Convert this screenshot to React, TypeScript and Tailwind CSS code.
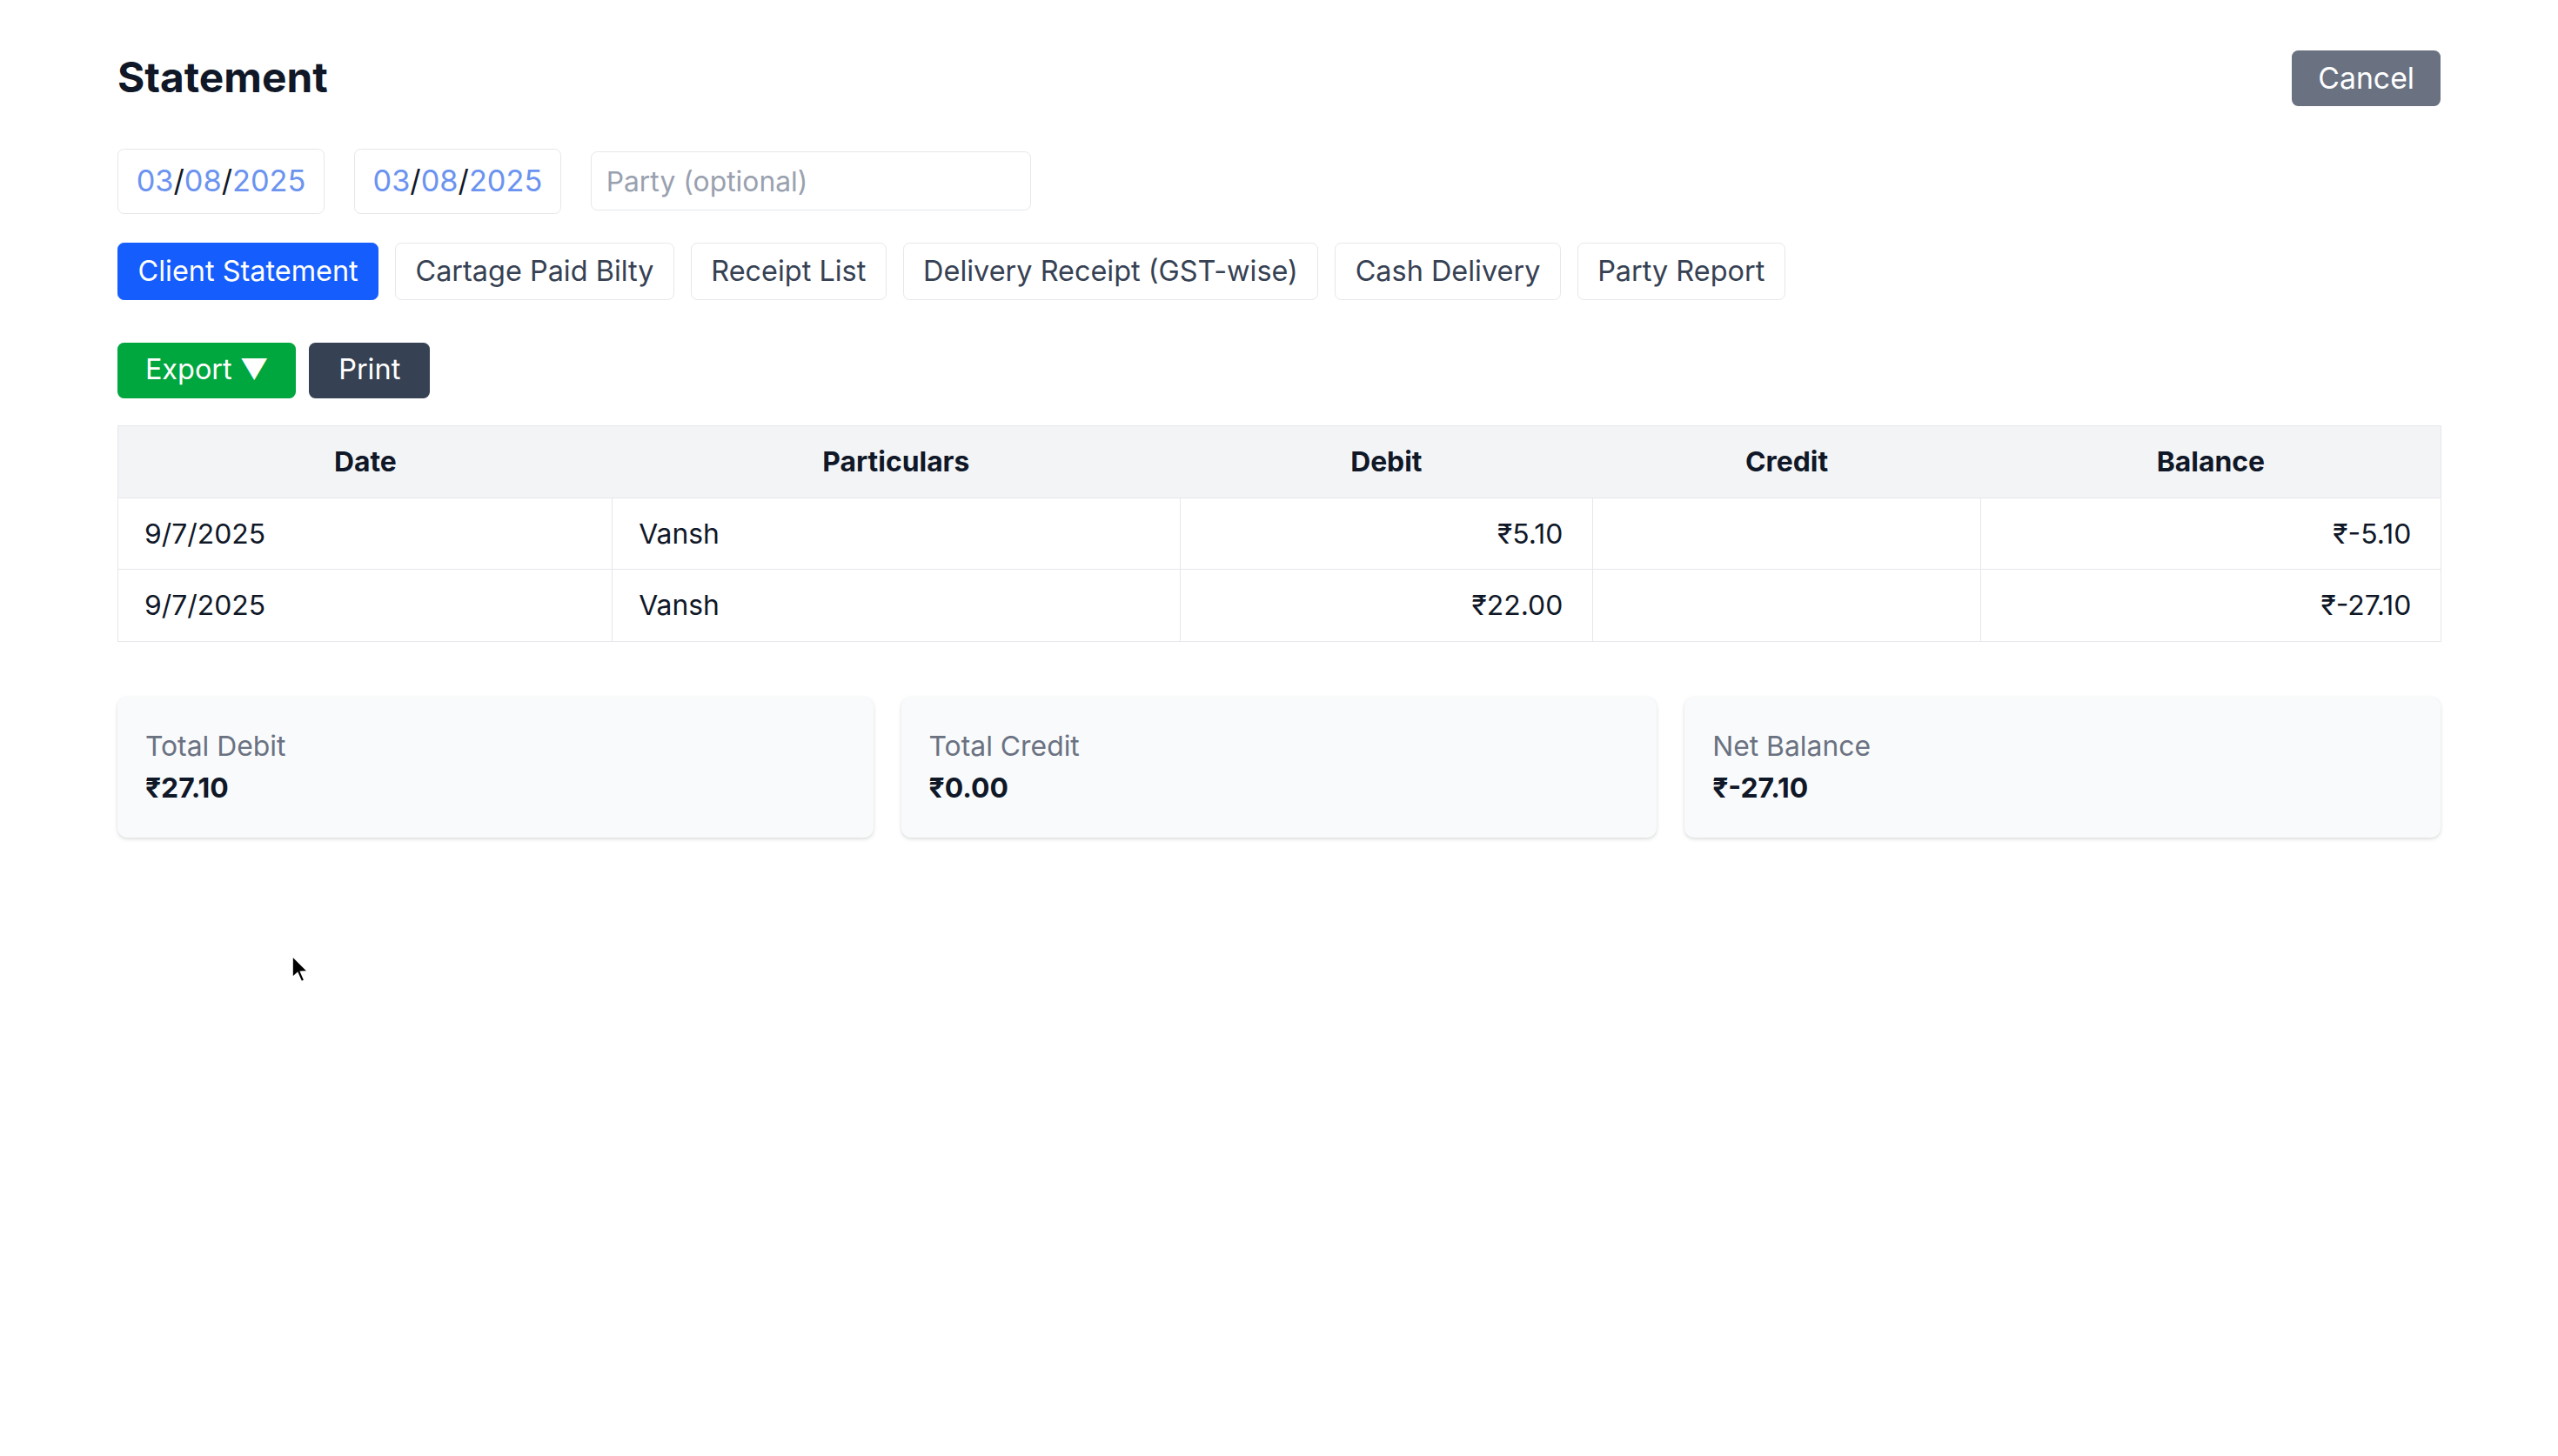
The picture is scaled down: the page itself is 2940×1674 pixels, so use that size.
import React from 'react';

const tabs = [
  'Client Statement',
  'Cartage Paid Bilty',
  'Receipt List',
  'Delivery Receipt (GST-wise)',
  'Cash Delivery',
  'Party Report',
];

const rows = [
  { date: '9/7/2025', particulars: 'Vansh', debit: '₹5.10', credit: '', balance: '₹-5.10' },
  { date: '9/7/2025', particulars: 'Vansh', debit: '₹22.00', credit: '', balance: '₹-27.10' },
];

const totals = [
  { label: 'Total Debit', value: '₹27.10' },
  { label: 'Total Credit', value: '₹0.00' },
  { label: 'Net Balance', value: '₹-27.10' },
];

function DateField() {
  return (
    <div className="flex h-10 w-[127px] items-center rounded border border-gray-200 bg-white px-[11px] text-[18.3px] text-gray-900">
      <span className="text-[#6b93f0]">03</span>
      <span>/</span>
      <span className="text-[#6b93f0]">08</span>
      <span>/</span>
      <span className="text-[#6b93f0]">2025</span>
    </div>
  );
}

export default function App() {
  const [active, setActive] = React.useState(0);

  return (
    <div className="bg-white font-['Inter','Noto_Sans',sans-serif] [zoom:1.875]">
      <div className="relative min-h-[893px] px-[72px] pt-[31px] text-gray-900">
        {/* header */}
        <div className="flex h-[34px] items-center justify-between">
          <h1 className="text-[25.5px] font-bold">Statement</h1>
          <button className="h-[34px] rounded bg-gray-500 px-4 text-lg text-white">Cancel</button>
        </div>

        {/* filters */}
        <div className="mt-[26px] flex items-center gap-[18px]">
          <DateField />
          <DateField />
          <input
            placeholder="Party (optional)"
            className="h-9 w-[270px] rounded border border-gray-200 px-[9px] text-[17px] outline-none placeholder:text-gray-400"
          />
        </div>

        {/* report tabs */}
        <div className="mt-[18px] flex gap-2.5">
          {tabs.map((t, i) => (
            <button
              key={t}
              onClick={() => setActive(i)}
              className={
                i === active
                  ? 'h-[35px] rounded border border-blue-600 bg-blue-600 px-3 text-[17.3px] text-white'
                  : 'h-[35px] rounded border border-gray-200 bg-white px-3 text-[17.3px] text-gray-700'
              }
            >
              {t}
            </button>
          ))}
        </div>

        {/* actions */}
        <div className="mt-[26px] flex gap-2">
          <button className="h-[34px] rounded bg-green-600 px-[17px] text-[17.3px] text-white">Export ▼</button>
          <button className="h-[34px] rounded bg-gray-700 px-[18px] text-[17.3px] text-white">Print</button>
        </div>

        {/* statement table */}
        <table className="mt-[17px] w-full table-fixed border-collapse border border-gray-200 text-[17px]">
          <colgroup>
            <col className="w-[303px]" />
            <col className="w-[348px]" />
            <col className="w-[253px]" />
            <col className="w-[238px]" />
            <col className="w-[282px]" />
          </colgroup>
          <thead>
            <tr className="bg-gray-100">
              {['Date', 'Particulars', 'Debit', 'Credit', 'Balance'].map((h) => (
                <th key={h} className="h-11 border-b border-gray-200 px-4 text-center font-bold">
                  {h}
                </th>
              ))}
            </tr>
          </thead>
          <tbody>
            {rows.map((r, i) => (
              <tr key={i}>
                <td className="h-11 border border-gray-200 px-4">{r.date}</td>
                <td className="h-11 border border-gray-200 px-4">{r.particulars}</td>
                <td className="h-11 border border-gray-200 pl-4 pr-[18px] text-right">{r.debit}</td>
                <td className="h-11 border border-gray-200 pl-4 pr-[18px] text-right">{r.credit}</td>
                <td className="h-11 border border-gray-200 pl-4 pr-[18px] text-right">{r.balance}</td>
              </tr>
            ))}
          </tbody>
        </table>

        {/* totals */}
        <div className="mt-[34px] grid grid-cols-3 gap-[17px]">
          {totals.map((c) => (
            <div key={c.label} className="rounded-md bg-gray-50 px-[17px] py-[17.5px] shadow">
              <div className="text-[17px] text-gray-500">{c.label}</div>
              <div className="text-[17px] font-bold">{c.value}</div>
            </div>
          ))}
        </div>

        {/* mouse pointer */}
        <svg className="absolute left-[178px] top-[585px] h-[18px] w-[12px]" viewBox="0 0 12 18">
          <path d="M1 1 L1 14.5 L4.2 11.6 L6.6 17 L8.6 16.1 L6.3 10.8 L10.6 10.6 Z" fill="#000" stroke="#fff" strokeWidth="1" />
        </svg>
      </div>
    </div>
  );
}
